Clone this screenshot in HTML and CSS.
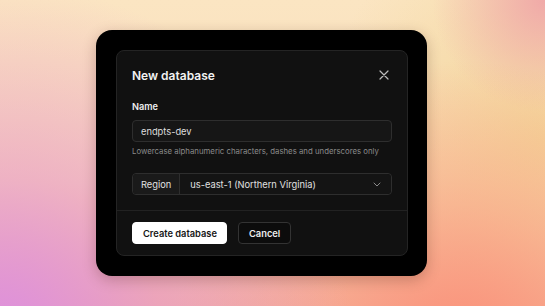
FILE: index.html
```html
<!DOCTYPE html>
<html lang="en">

<head>
    <meta charset="UTF-8">
    <meta name="viewport" content="width=device-width, initial-scale=1.0">
    <title>New database</title>
    <link rel="stylesheet" href="styles.css">
</head>

<body>
    <div class="fundo">
        <div class="moldura">
            <div class="dialogo">
                <div class="corpo">
                    <div class="topo">
                        <h2>New database</h2>
                        <button class="fechar" aria-label="Close">
                            <svg width="10" height="10" viewBox="0 0 10 10"><path d="M1 1L9 9M9 1L1 9" stroke="#bdbdbd" stroke-width="1.2" stroke-linecap="round"/></svg>
                        </button>
                    </div>

                    <label class="rotulo" for="nome">Name</label>
                    <input id="nome" class="campo" type="text" value="endpts-dev">
                    <p class="ajuda">Lowercase alphanumeric characters, dashes and underscores only</p>

                    <div class="grupo">
                        <span class="prefixo">Region</span>
                        <div class="selecao">
                            <span>us-east-1 (Northern Virginia)</span>
                            <svg width="8" height="5" viewBox="0 0 8 5"><path d="M1 1L4 4L7 1" fill="none" stroke="#8a8a8a" stroke-width="1" stroke-linecap="round" stroke-linejoin="round"/></svg>
                        </div>
                    </div>
                </div>

                <div class="rodape">
                    <button class="botao primario">Create database</button>
                    <button class="botao">Cancel</button>
                </div>
            </div>
        </div>
    </div>
</body>

</html>
```

FILE: styles.css
```css
* {
    margin: 0;
    padding: 0;
    box-sizing: border-box;
}

body {
    font-family: Inter, "Noto Sans", sans-serif;
}

.fundo {
    width: 545px;
    height: 306px;
    padding: 30px 0 0 96px;
    background-color: #f8dfb6;
    background-image:
        radial-gradient(circle at 0% 110%, #dc8ee0 0%, rgba(232, 150, 200, 0.6) 25%, rgba(240, 170, 170, 0) 55%),
        radial-gradient(circle at 85% 115%, #fb8f78 0%, rgba(250, 160, 130, 0.6) 25%, rgba(250, 180, 140, 0) 50%),
        radial-gradient(circle at 100% 0%, #f0a9a8 0%, rgba(240, 190, 170, 0) 18%),
        radial-gradient(circle at 100% 45%, #f3d79a 0%, rgba(243, 215, 154, 0) 40%),
        linear-gradient(180deg, #fbe5c2 0%, #f8dcbc 60%, #f2b6a4 100%);
}

.moldura {
    width: 331px;
    padding: 20px 19px 20px 20px;
    background-color: #000;
    border-radius: 16px;
    box-shadow: 0 4px 14px rgba(60, 20, 10, 0.25);
}

.dialogo {
    background-color: #111;
    border: 1px solid #242424;
    border-radius: 8px;
    color: #ededed;
}

.corpo {
    padding: 14px 15px 15px 15px;
    border-bottom: 1px solid #222;
}

.topo {
    display: flex;
    justify-content: space-between;
    align-items: center;
    height: 20px;
}

.topo h2 {
    font-size: 12px;
    font-weight: 600;
    color: #f2f2f2;
}

.fechar {
    background: none;
    border: none;
    width: 12px;
    height: 12px;
    margin-right: 2px;
    display: flex;
    align-items: center;
    justify-content: center;
}

.rotulo {
    display: block;
    margin-top: 14px;
    font-size: 9.2px;
    font-weight: 600;
    line-height: 16px;
}

.campo {
    display: block;
    width: 100%;
    height: 22px;
    margin-top: 5px;
    padding: 0 8px;
    background-color: #161616;
    border: 1px solid #2e2e2e;
    border-radius: 4px;
    color: #dedede;
    font-family: inherit;
    font-size: 9.3px;
}

.ajuda {
    margin-top: 3px;
    font-size: 7.8px;
    line-height: 12px;
    color: #8a8a8a;
    white-space: nowrap;
}

.grupo {
    display: flex;
    height: 22px;
    margin-top: 16px;
    border: 1px solid #2e2e2e;
    border-radius: 4px;
    font-size: 9.3px;
    color: #e0e0e0;
}

.prefixo {
    display: flex;
    align-items: center;
    padding: 0 8px;
    background-color: #1a1a1a;
    border-right: 1px solid #2e2e2e;
    border-radius: 4px 0 0 4px;
}

.selecao {
    flex: 1;
    display: flex;
    align-items: center;
    justify-content: space-between;
    padding: 0 10px 0 10px;
    background-color: #141414;
    border-radius: 0 4px 4px 0;
}

.rodape {
    display: flex;
    gap: 11px;
    padding: 11px 15px;
}

.botao {
    height: 22px;
    padding: 0 10px;
    background-color: #0c0c0c;
    border: 1px solid #333;
    border-radius: 4px;
    color: #ededed;
    font-family: inherit;
    font-size: 9.3px;
    font-weight: 600;
    white-space: nowrap;
}

.primario {
    width: 95px;
    background-color: #fff;
    border-color: #fff;
    color: #161616;
}
```
